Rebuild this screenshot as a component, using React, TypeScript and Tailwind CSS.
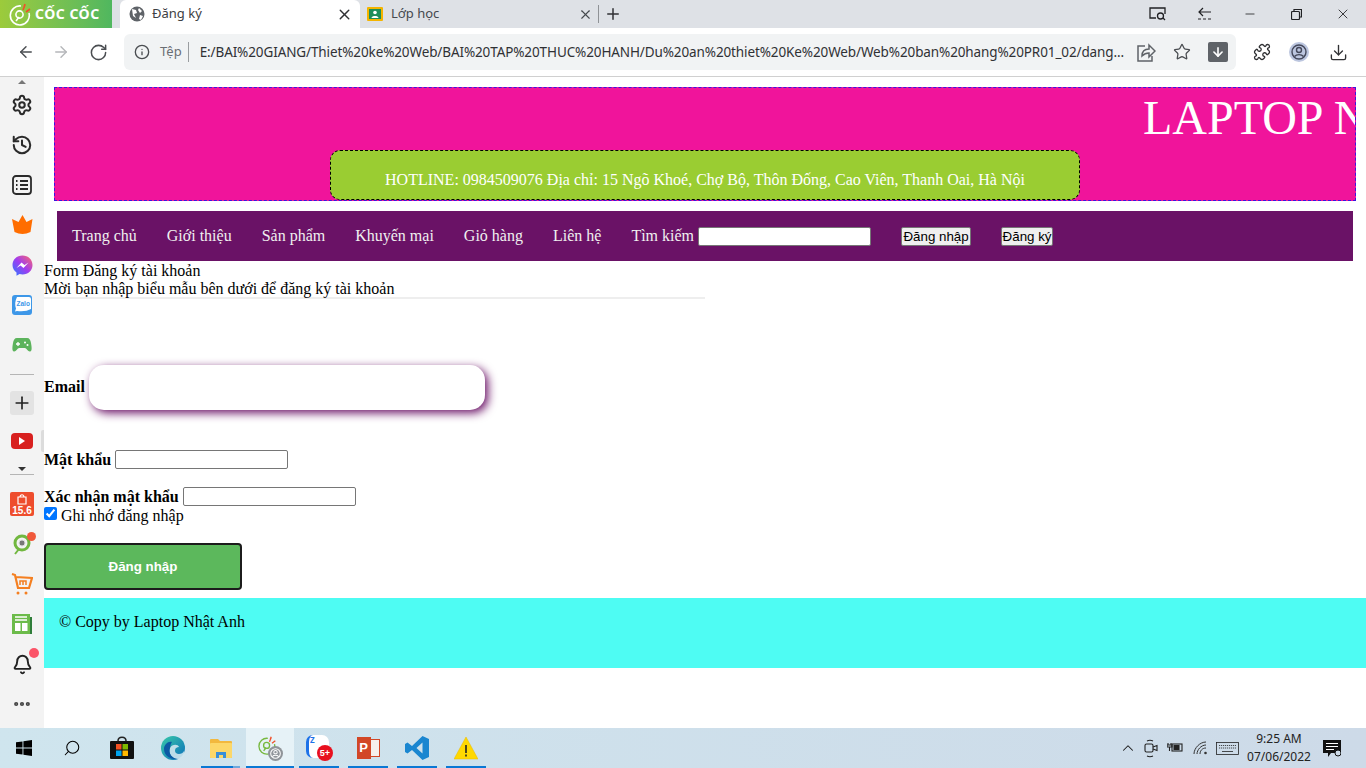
import React from "react";
import {
  ArrowLeft, ArrowRight, RotateCw, Info, X, Plus, Star, ArrowDown, Puzzle, Download,
  Minus, ChevronUp, Search, Settings, History, Ellipsis, Bell,
} from "lucide-react";

const ui = "font-['Noto_Sans',sans-serif]";
const serif = "font-['Liberation_Serif',serif]";
const arial = "font-['Liberation_Sans',sans-serif]";

function CocLogo({ size = 24, color = "#fff" }: { size?: number; color?: string }) {
  return (
    <svg width={size} height={size} viewBox="0 0 24 24" fill="none">
      <path d="M13 4a9.5 9.5 0 1 0 8 7" stroke={color} strokeWidth="1.6" />
      <circle cx="11.5" cy="12.5" r="3.6" stroke={color} strokeWidth="1.6" />
      <path d="M8 19l3-4" stroke={color} strokeWidth="1.6" />
      <path d="M15 8l2-5M18 10l4-3M16 5l1-3" stroke="#f0502a" strokeWidth="1.6" />
    </svg>
  );
}

function TopBar() {
  return (
    <div className={`h-[28px] shrink-0 bg-[#dee1e6] flex items-stretch ${ui}`}>
      <div className="w-[112px] bg-gradient-to-r from-[#9ccb3b] to-[#4fb75f] flex items-center pl-[8px] gap-[3px] text-white">
        <CocLogo />
        <span className="text-[14px] font-bold tracking-[0.5px] leading-none">CỐC CỐC</span>
      </div>
      <div className="w-[8px]" />
      <div className="w-[240px] bg-white rounded-t-[6px] flex items-center pl-[9px] pr-[7px] text-[#3c4043]">
        <svg width="16" height="16" viewBox="0 0 16 16"><circle cx="8" cy="8" r="7.5" fill="#5f6368" /><path d="M3 3l4 1 1 3-3 1 2 4-3-2zM10 2l3 3-2 2-2-3zM11 9l3 1-2 4-2-1z" fill="#fff" /></svg>
        <span className="ml-[7px] text-[13px] flex-1">Đăng ký</span>
        <X size={17} strokeWidth={2} className="text-[#303134]" />
      </div>
      <div className="w-[238px] flex items-center pl-[7px] pr-[5px] text-[#45494e]">
        <svg width="16" height="14" viewBox="0 0 16 14"><rect width="16" height="14" rx="1" fill="#f4b400" /><rect x="2" y="2" width="12" height="10" fill="#1e8e5a" /><circle cx="8" cy="5.5" r="1.8" fill="#fff" /><path d="M4.5 11c.3-2.6 6.700-2.600 7 0z" fill="#fff" /></svg>
        <span className="ml-[8px] text-[13px] flex-1">Lớp học</span>
        <X size={15} strokeWidth={1.8} className="text-[#45494e]" />
      </div>
      <div className="flex items-center">
        <div className="w-px h-[18px] bg-[#8f9296]" />
        <Plus size={18} strokeWidth={2} className="ml-[5px] text-[#303134]" />
      </div>
      <div className="flex-1" />
      <div className="flex items-center text-[#202124]">
        <svg width="18" height="14" viewBox="0 0 18 14" fill="none" stroke="#202124" strokeWidth="1.3"><path d="M7 11H1V1h15v6" /><circle cx="11.500" cy="9" r="3" /><path d="M14 11l2 2" /></svg>
        <svg className="ml-[30px]" width="16" height="14" viewBox="0 0 16 14" fill="none" stroke="#202124" strokeWidth="1.2"><path d="M14 5H2M6 1L2 5l4 4" /><path d="M1 12h14" strokeDasharray="3 2" /></svg>
        <Minus size={14} strokeWidth={1.4} className="ml-[30px]" />
        <svg className="ml-[34px]" width="11" height="11" viewBox="0 0 11 11" fill="none" stroke="#202124" strokeWidth="1.2"><rect x="0.500" y="2.500" width="8" height="8" rx="1" /><path d="M3 2.500V.5h7.500V8H8.500" /></svg>
        <X size={16} strokeWidth={1.3} className="ml-[33px] mr-[15px]" />
      </div>
    </div>
  );
}

function Toolbar() {
  return (
    <div className={`h-[49px] shrink-0 bg-white border-b border-[#d0d0d0] flex items-center ${ui}`}>
      <ArrowLeft size={18} strokeWidth={1.9} className="ml-[17px] text-[#4a4d51]" />
      <ArrowRight size={18} strokeWidth={1.9} className="ml-[17px] text-[#b5b7ba]" />
      <RotateCw size={19} strokeWidth={1.9} className="ml-[19px] text-[#4a4d51]" />
      <div className="ml-[16px] w-[1112px] h-[36px] rounded-[6px] bg-[#f1f3f4] flex items-center">
        <Info size={16} strokeWidth={2} className="ml-[10px] text-[#4a4d51]" />
        <span className="ml-[10px] text-[13px] text-[#6a6e73]">Tệp</span>
        <div className="ml-[6px] w-px h-[20px] bg-[#9a9da0]" />
        <span className="ml-[11px] w-[924px] whitespace-nowrap overflow-hidden text-[13.5px] tracking-[-0.11px] text-[#303134]">E:/BAI%20GIANG/Thiet%20ke%20Web/BAI%20TAP%20THUC%20HANH/Du%20an%20thiet%20Ke%20Web/Web%20ban%20hang%20PR01_02/dang...</span>
        <svg className="ml-[12px]" width="20" height="19" viewBox="0 0 20 19" fill="none" stroke="#5f6368" strokeWidth="1.5"><path d="M9 3H2v15h14v-5" /><path d="M6 13c0-5 3-7 7-7V2l6 6-6 6V10c-3 0-5 1-7 3z" /></svg>
        <Star size={18} strokeWidth={1.7} className="ml-[17px] text-[#4a4d51]" />
        <div className="ml-[17px] w-[20px] h-[20px] rounded-[2px] bg-[#5f6368] flex items-center justify-center">
          <ArrowDown size={14} strokeWidth={2.8} className="text-white" />
        </div>
      </div>
      <Puzzle size={18} strokeWidth={1.7} className="ml-[17px] text-[#303134]" />
      <div className="ml-[18px] w-[20px] h-[20px] rounded-full bg-[#bcc6df] flex items-center justify-center">
        <svg width="16" height="16" viewBox="0 0 16 16" fill="none" stroke="#44485a" strokeWidth="1.400"><circle cx="8" cy="8" r="7" /><circle cx="8" cy="6" r="2.500" /><path d="M3.500 12.500c2-2.500 7-2.500 9 0" /></svg>
      </div>
      <Download size={19} strokeWidth={1.7} className="ml-[20px] text-[#303134]" />
    </div>
  );
}

function SideCell({ children }: { children: React.ReactNode }) {
  return <div className="h-[40px] flex items-center justify-center shrink-0">{children}</div>;
}

function Sidebar() {
  return (
    <div className="w-[44px] shrink-0 bg-[#f3f3f3] flex flex-col items-stretch relative">
      <div className="h-[8px] flex justify-center pt-[3px]">
        <div className="w-0 h-0 border-l-[4px] border-r-[4px] border-b-[4px] border-l-transparent border-r-transparent border-b-[#777]" />
      </div>
      <SideCell><Settings size={22} strokeWidth={2.2} className="text-[#2a2a2a]" /></SideCell>
      <SideCell><History size={22} strokeWidth={2.2} className="text-[#2a2a2a]" /></SideCell>
      <SideCell>
        <svg width="20" height="20" viewBox="0 0 20 20" fill="none" stroke="#2a2a2a" strokeWidth="1.800"><rect x="1" y="1" width="18" height="18" rx="3" /><path d="M4 6h1.500M4 10h1.500M4 14h1.500M8 6h8M8 10h8M8 14h8" /></svg>
      </SideCell>
      <SideCell>
        <svg width="21" height="20" viewBox="0 0 21 20"><path d="M10.500 0l4 7 6-3-2 13q-8 4-16 0L0 4l6.500 3z" fill="#ff6d00" /></svg>
      </SideCell>
      <SideCell>
        <svg width="21" height="21" viewBox="0 0 21 21">
          <defs><linearGradient id="ms" x1="0" y1="1" x2="1" y2="0"><stop offset="0" stopColor="#2a7bff" /><stop offset="0.500" stopColor="#a03cf0" /><stop offset="1" stopColor="#ff6a6a" /></linearGradient></defs>
          <path d="M10.500 0.500c5.700 0 10 4 10 9.500s-4.300 9.500-10 9.500c-1 0-2-.1-2.900-.4L4.500 20.800v-3.200C2 15.800.5 13.200.5 10 .5 4.500 4.800.5 10.500.5z" fill="url(#ms)" />
          <path d="M4.500 13l5-5.500 3 2.500 4-2.500-5 5.500-3-2.500z" fill="#fff" />
        </svg>
      </SideCell>
      <SideCell>
        <svg width="20" height="20" viewBox="0 0 20 20"><path d="M3 0h14a3 3 0 0 1 3 3v14a3 3 0 0 1-3 3H3a3 3 0 0 1-3-3V3a3 3 0 0 1 3-3z" fill="#3d97e8" /><path d="M5 2h12a2 2 0 0 1 2 2v10q-5 3-14 2l-2 .5 1-3Q2 8 5 2z" fill="#fff" /><text x="4.500" y="11" fontSize="6.500" fontWeight="700" fill="#3d97e8" fontFamily="Liberation Sans, sans-serif">Zalo</text></svg>
      </SideCell>
      <SideCell>
        <svg width="20" height="14" viewBox="0 0 20 14"><path d="M5 0h10c2.500 0 3.500 2 4 5 .5 3 1.500 8-1 8.500-2 .4-3-3-5-3.500H7c-2 .5-3 3.900-5 3.500C-.5 13 .5 8 1 5c.5-3 1.500-5 4-5z" fill="#5cb35c" /><path d="M4 6h4M6 4v4" stroke="#fff" strokeWidth="1.300" /><circle cx="13" cy="4.500" r="1" fill="#fff" /><circle cx="15.500" cy="7" r="1" fill="#fff" /></svg>
      </SideCell>
      <div className="h-[8px]" />
      <div className="mx-[10px] h-px bg-[#b5b5b5] mt-[1px]" />
      <div className="h-[16px]" />
      <div className="mx-[10px] h-[24px] w-[24px] rounded-[3px] bg-[#e3e3e3] flex items-center justify-center">
        <Plus size={20} strokeWidth={2} className="text-[#222]" />
      </div>
      <div className="h-[18px]" />
      <div className="flex justify-center">
        <div className="w-[22px] h-[16px] rounded-[4px] bg-[#d8201f] flex items-center justify-center">
          <div className="w-0 h-0 border-t-[4px] border-b-[4px] border-l-[6px] border-t-transparent border-b-transparent border-l-white" />
        </div>
      </div>
      <div className="h-[8px] flex justify-center mt-[17px]">
        <div className="w-0 h-0 border-l-[4px] border-r-[4px] border-t-[4px] border-l-transparent border-r-transparent border-t-[#333] mt-[1px]" />
      </div>
      <div className="mx-[10px] h-px bg-[#b5b5b5]" />
      <div className="h-[9px]" />
      <SideCell>
        <div className="w-[24px] h-[24px] rounded-[2px] bg-[#ee4d2d] flex flex-col items-center justify-end relative">
          <svg className="absolute top-[2px] left-[7px]" width="10" height="11" viewBox="0 0 10 11" fill="none" stroke="#fff" strokeWidth="1.200"><path d="M1 3h8v7H1zM3 3c0-3 4-3 4 0" /></svg>
          <span className={`${arial} text-white text-[10px] font-bold leading-[11px]`}>15.6</span>
        </div>
      </SideCell>
      <SideCell>
        <div className="relative">
          <svg width="20" height="22" viewBox="0 0 20 22" fill="none">
            <circle cx="10" cy="10" r="7" stroke="#71b73f" strokeWidth="3" />
            <circle cx="10" cy="10" r="3" fill="#777" stroke="#ddd" />
            <path d="M7 16l-4 5" stroke="#71b73f" strokeWidth="2" />
          </svg>
          <div className="absolute -top-[1px] -right-[4px] w-[9px] h-[9px] rounded-full bg-[#f0583a]" />
        </div>
      </SideCell>
      <SideCell>
        <svg width="22" height="22" viewBox="0 0 22 22" fill="none" stroke="#f47f20" strokeWidth="2.200"><path d="M1 1l3 1 3 13h11l3-10-16-1" /><path d="M9 12V8h6v4M12 8v4" strokeWidth="1.500" /><circle cx="7" cy="20" r="1.500" fill="#f47f20" stroke="none" /><circle cx="15" cy="20" r="1.500" fill="#f47f20" stroke="none" /></svg>
      </SideCell>
      <SideCell>
        <svg width="20" height="20" viewBox="0 0 20 20"><rect width="18" height="20" fill="#6cbb4a" /><rect x="18" y="3" width="2" height="17" fill="#2f7d3a" /><path d="M3 3h12M3 6h12" stroke="#fff" strokeWidth="1.300" /><rect x="3" y="9" width="5.500" height="8" fill="#fff" /><rect x="10" y="9" width="5.500" height="8" fill="#fff" /></svg>
      </SideCell>
      <SideCell>
        <div className="relative">
          <Bell size={21} strokeWidth={2.2} className="text-[#222]" />
          <div className="absolute -top-[6px] -right-[6px] w-[10px] h-[10px] rounded-full bg-[#fb5468]" />
        </div>
      </SideCell>
      <SideCell><Ellipsis size={20} strokeWidth={3} className="text-[#444]" /></SideCell>
      <div className="absolute left-[41px] top-[353px] w-[3px] h-[22px] bg-[#dcdcdc] rounded-l-[2px]" />
    </div>
  );
}

const navItems = ["Trang chủ", "Giới thiệu", "Sản phẩm", "Khuyến mại", "Giỏ hàng", "Liên hệ"];

function Page() {
  return (
    <div className={`flex-1 min-w-0 bg-white text-black text-[16px] leading-[18px] ${serif}`}>
      <div className="pt-[10px] ml-[10px] mr-[10px]">
        <div className="h-[114px] bg-[#f0149b] border border-dashed border-[#3a16e0] overflow-hidden flex flex-col items-start">
          <div className="h-[62px] pl-[1088px] pt-[2px] text-white text-[48px] leading-[55px] whitespace-nowrap">LAPTOP NHẬT ANH</div>
          <div className="ml-[275px] w-[750px] h-[50px] bg-[#9acd32] border border-dashed border-black rounded-[10px] text-center text-white pt-[20px] leading-[18px]">
            HOTLINE: 0984509076 Địa chỉ: 15 Ngõ Khoé, Chợ Bộ, Thôn Đống, Cao Viên, Thanh Oai, Hà Nội
          </div>
        </div>
      </div>
      <div className="ml-[13px] mr-[13px] mt-[10px] h-[50px] bg-[#6a1266] flex items-center text-[#f0f0f0]">
        {navItems.map((n) => (
          <span key={n} className="px-[15px] whitespace-nowrap">{n}</span>
        ))}
        <span className="pl-[15px] pr-[4px] whitespace-nowrap">Tìm kiếm</span>
        <input className="w-[173px] h-[19px] bg-white border border-[#767676] rounded-[2px]" />
        <button className={`ml-[30px] h-[19px] w-[70px] bg-[#efefef] border border-[#767676] rounded-[2px] text-black text-[13.33px] leading-[15px] ${arial}`}>Đăng nhập</button>
        <button className={`ml-[30px] h-[19px] w-[52px] bg-[#efefef] border border-[#767676] rounded-[2px] text-black text-[13.33px] leading-[15px] ${arial}`}>Đăng ký</button>
      </div>
      <div className="mt-px">Form Đăng ký tài khoản</div>
      <div>Mời bạn nhập biểu mẫu bên dưới để đăng ký tài khoản</div>
      <div className="w-[661px] h-[2px] bg-[#eeeeee] -mt-px" />
      <div className="mt-[65px] flex items-center h-[46px]">
        <b>Email</b>
        <input className="ml-[4px] w-[396px] h-[45px] bg-white rounded-[15px] shadow-[3px_3px_10px_#6a1266] outline-none" />
      </div>
      <div className="mt-[39px] flex items-center h-[20px]">
        <b className="pt-[2px]">Mật khẩu</b>
        <input className="ml-[4px] w-[173px] h-[19px] bg-white border border-[#767676] rounded-[2px]" />
      </div>
      <div className="mt-[17px] flex items-center h-[20px]">
        <b className="pt-[2px]">Xác nhận mật khẩu</b>
        <input className="ml-[4px] w-[173px] h-[19px] bg-white border border-[#767676] rounded-[2px]" />
      </div>
      <div className="flex items-center h-[18px]">
        <input type="checkbox" defaultChecked className="w-[13px] h-[13px] m-0 -mt-[3px] accent-[#0075ff]" />
        <span className="ml-[4px] pt-[2px]">Ghi nhớ đăng nhập</span>
      </div>
      <button className={`block mt-[19px] w-[198px] h-[47px] bg-[#5cb85c] border-2 border-[#1c1c1c] rounded-[4px] text-white font-bold text-[13.33px] ${arial}`}>Đăng nhập</button>
      <div className="mt-[8px] h-[70px] bg-[#4efcf3] pl-[15px] pt-[15px]">© Copy by Laptop Nhật Anh</div>
    </div>
  );
}

function TaskSlot({ w, active, children, line = true }: { w: number; active?: boolean; children: React.ReactNode; line?: boolean }) {
  return (
    <div style={{ width: w }} className={`h-[40px] flex items-center justify-center relative shrink-0 ${active ? "bg-[#e6f2f7]" : ""}`}>
      {children}
      {line && <div className="absolute bottom-0 left-0 right-0 h-[2px] bg-[#0a78d4]" />}
    </div>
  );
}

function Taskbar() {
  return (
    <div className={`h-[40px] shrink-0 bg-gradient-to-r from-[#cfe5ee] to-[#cddae8] flex items-stretch ${ui}`}>
      <div className="w-[48px] flex items-center justify-center">
        <svg width="16" height="16" viewBox="0 0 16 16" fill="#000"><path d="M0 2.300l6.500-.9v6.200H0zM7.400 1.300L16 0v7.600H7.400zM0 8.400h6.500v6.200L0 13.700zM7.400 8.400H16V16l-8.600-1.200z" /></svg>
      </div>
      <div className="w-[48px] flex items-center justify-center">
        <Search size={18} strokeWidth={1.4} className="text-black -scale-x-100" />
      </div>
      <div className="w-[52px] flex items-center justify-center">
        <svg width="24" height="24" viewBox="0 0 24 24"><path d="M8 5c0-5 8-5 8 0" fill="none" stroke="#222" strokeWidth="1.500" /><rect y="5" width="24" height="18" rx="1" fill="#111" /><rect x="6" y="8" width="5.500" height="5.500" fill="#f25022" /><rect x="12.500" y="8" width="5.500" height="5.500" fill="#7fba00" /><rect x="6" y="14.500" width="5.500" height="5.500" fill="#00a4ef" /><rect x="12.500" y="14.500" width="5.500" height="5.500" fill="#ffb900" /></svg>
      </div>
      <div className="w-[49px] flex items-center justify-center">
        <svg width="24" height="24" viewBox="0 0 24 24"><defs><linearGradient id="ed" x1="0" y1="0" x2="1" y2="1"><stop offset="0" stopColor="#38c9a8" /><stop offset="1" stopColor="#0c6fbb" /></linearGradient></defs><circle cx="12" cy="12" r="12" fill="url(#ed)" /><path d="M23 15c-1 3-6 4-8 2-2-2-1-6 3-6-1-3-7-3-9 1-2 5 2 11 8 11 3 0 6-2 7-4z" fill="#cfe5ee" opacity="0.900" /><path d="M9 12c-2 5 2 11 8 11-7 1-14-3-14-10 0-4 4-8 8-7-1 1-1.500 3-2 6z" fill="#0c59a4" /></svg>
      </div>
      <div className="w-[4px]" />
      <TaskSlot w={39}>
        <svg width="22" height="19" viewBox="0 0 22 19"><path d="M0 1a1 1 0 0 1 1-1h7l2 2h11a1 1 0 0 1 1 1v15a1 1 0 0 1-1 1H1a1 1 0 0 1-1-1z" fill="#f2b83e" /><rect y="4" width="22" height="15" rx="1" fill="#fcd769" /><path d="M6 19v-6h10v6h-3v-3H9v3z" fill="#3a8fd8" /></svg>
        <div className="absolute bottom-0 right-0 w-[7px] h-[2px] bg-[#6fa8dc] z-10" />
      </TaskSlot>
      <div className="w-[6px]" />
      <TaskSlot w={48} active>
        <div className="relative w-[26px] h-[26px]">
          <CocLogo size={20} color="#76b83f" />
          <div className="absolute right-0 bottom-0 w-[15px] h-[15px] rounded-full bg-[#8f9499] flex items-center justify-center">
            <svg width="11" height="11" viewBox="0 0 16 16" fill="none" stroke="#fff" strokeWidth="1.500"><circle cx="8" cy="8" r="7" /><circle cx="8" cy="6" r="2.500" /><path d="M3.500 12.500c2-2.500 7-2.500 9 0" /></svg>
          </div>
        </div>
      </TaskSlot>
      <div className="w-[5px]" />
      <TaskSlot w={40}>
        <div className="relative w-[26px] h-[26px]">
          <div className="w-[23px] h-[23px] rounded-[7px] bg-white border-l-[3px] border-[#1d72e8] text-[#1d72e8] text-[8px] font-bold leading-[10px] pl-[1px]">Z</div>
          <div className={`absolute -right-[1px] bottom-0 w-[16px] h-[16px] rounded-full bg-[#e8101e] text-white text-[9px] font-bold leading-[16px] text-center ${arial}`}>5+</div>
        </div>
      </TaskSlot>
      <div className="w-[9px]" />
      <TaskSlot w={40}>
        <div className="relative w-[23px] h-[22px]">
          <div className="absolute right-0 top-[2px] w-[13px] h-[18px] bg-[#f6f0ec] border border-[#d24726]" />
          <div className={`absolute left-0 top-0 w-[14px] h-[22px] bg-[#d24726] text-white text-[13px] font-bold leading-[22px] text-center ${arial}`}>P</div>
        </div>
      </TaskSlot>
      <div className="w-[9px]" />
      <TaskSlot w={40}>
        <svg width="24" height="24" viewBox="0 0 24 24"><path d="M17.500 0L24 3v18l-6.500 3L7 14l-4.500 3.500L0 16v-8l2.500-1.500L7 10zM17.500 6.500L11.500 12l6 5.500z" fill="#1a86d0" /></svg>
      </TaskSlot>
      <div className="w-[9px]" />
      <TaskSlot w={40}>
        <svg width="24" height="24" viewBox="0 0 24 24"><path d="M12 1l12 22H0z" fill="#ffd800" stroke="#e8b800" strokeWidth="0.500" /><path d="M12 9v8M12 18.500v2" stroke="#222" strokeWidth="1.600" /></svg>
      </TaskSlot>
      <div className="flex-1" />
      <div className="flex items-center text-[#1a1a1a]">
        <ChevronUp size={18} strokeWidth={1.4} />
        <svg className="ml-[7px]" width="14" height="19" viewBox="0 0 14 19" fill="none" stroke="#222" strokeWidth="1.100"><rect x="1" y="5" width="8" height="8" rx="1.500" /><path d="M9 8l4-1.500v5L9 10M3 2c2-1 4-1 6 0M3 17c2 1 4 1 6 0" /></svg>
        <svg className="ml-[9px]" width="16" height="12" viewBox="0 0 16 12" fill="none" stroke="#222" strokeWidth="1.100"><rect x="5" y="2" width="10" height="7" /><rect x="7" y="3.500" width="5" height="4" fill="#222" /><path d="M1 1v2M4 1v2M0 3h5v2H0zM2.500 5v4" /></svg>
        <svg className="ml-[10px]" width="15" height="14" viewBox="0 0 15 14" fill="none" stroke="#333" strokeWidth="1"><path d="M1 13C1 7 7 1 13 1M4 13c0-4 4-9 9-9M7 13c0-3 2-6 6-6" /><circle cx="12.500" cy="12" r="1.300" fill="#333" stroke="none" /></svg>
        <svg className="ml-[8px]" width="23" height="13" viewBox="0 0 23 13" fill="none" stroke="#222" strokeWidth="0.800"><rect x="0.500" y="0.500" width="22" height="12" /><path d="M3 3.500h17M3 6h17" strokeDasharray="1.200 0.800" /><path d="M6 9.500h11" /></svg>
        <div className="ml-[5px] w-[70px] text-center text-[12px] leading-[18px] text-[#222]">
          <div>9:25 AM</div>
          <div>07/06/2022</div>
        </div>
        <div className="ml-[9px] mr-[25px] relative">
          <svg width="18" height="17" viewBox="0 0 18 17"><path d="M0 0h18v13H8l-3 4v-4H0z" fill="#111" /><path d="M3 3.500h12M3 6.500h12M3 9.500h8" stroke="#fff" strokeWidth="1" /><circle cx="15" cy="13" r="3" fill="#cddae8" stroke="#111" strokeWidth="1" /></svg>
        </div>
      </div>
    </div>
  );
}

export default function App() {
  return (
    <div className="w-[1366px] h-[768px] flex flex-col overflow-hidden bg-white">
      <TopBar />
      <Toolbar />
      <div className="flex-1 min-h-0 flex">
        <Sidebar />
        <Page />
      </div>
      <Taskbar />
    </div>
  );
}
